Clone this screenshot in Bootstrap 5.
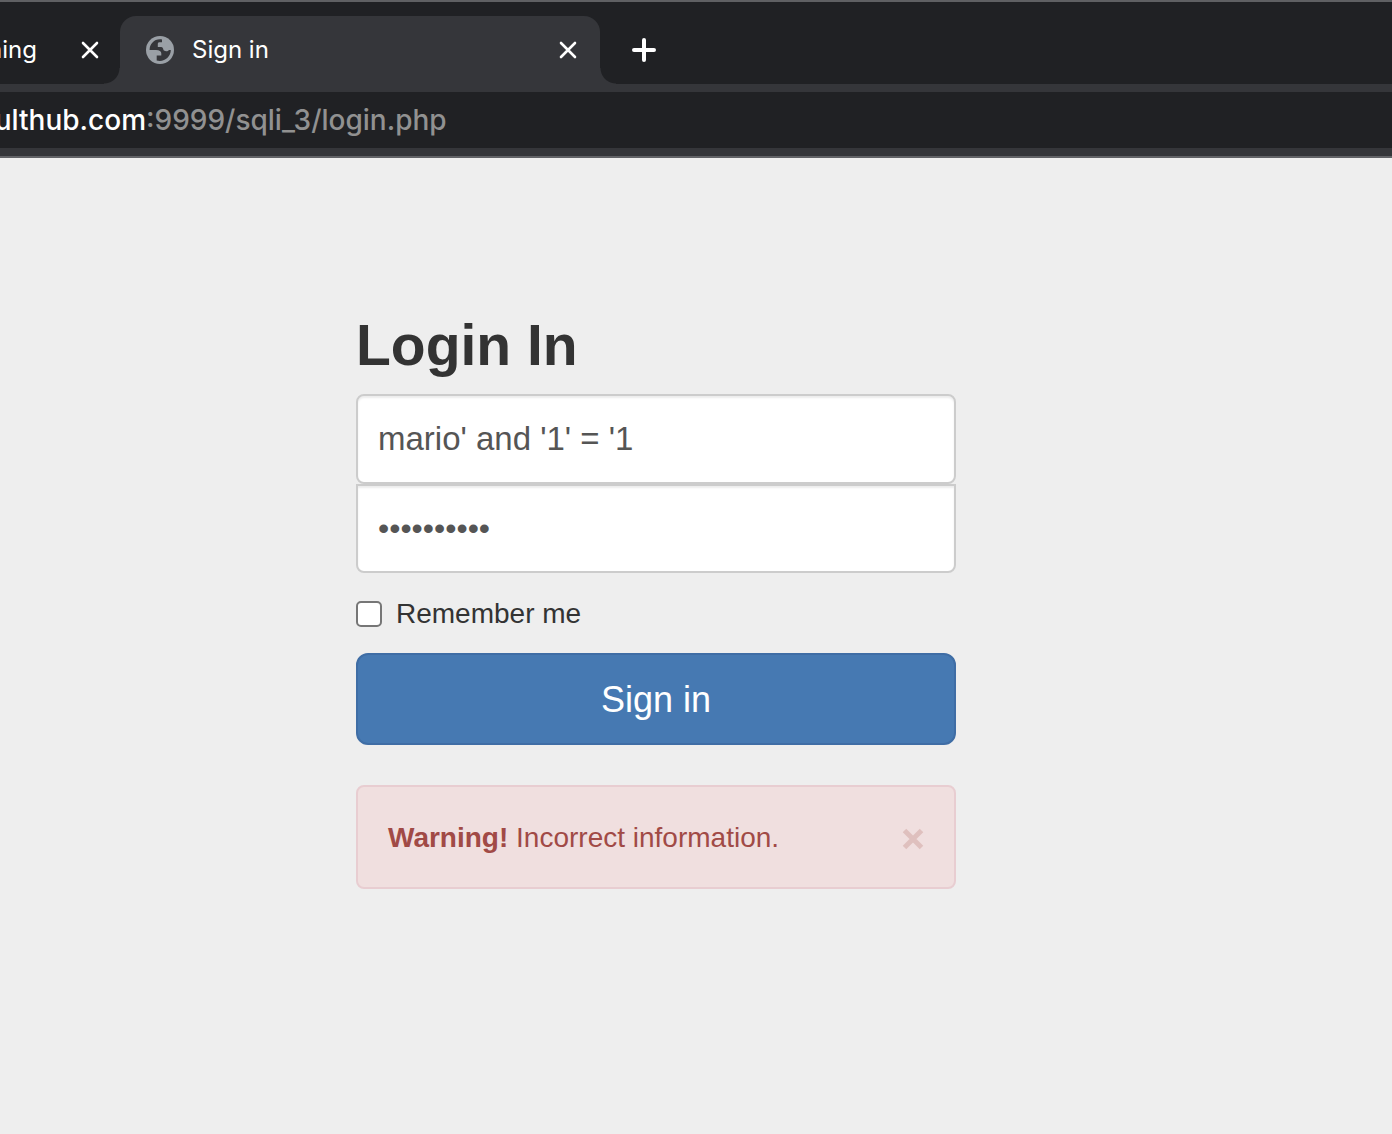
<!DOCTYPE html>
<html lang="en">
<head>
<meta charset="utf-8">
<meta name="viewport" content="width=device-width, initial-scale=1">
<title>Sign in</title>
<link href="https://cdn.jsdelivr.net/npm/bootstrap@5.3.0/dist/css/bootstrap.min.css" rel="stylesheet">
<style>
  body { background: #eee; color: #333; font-family: "Liberation Sans", Arial, sans-serif; font-size: 28px; line-height: 40px; }
  .browser { background: #35363a; font-family: Inter, "Noto Sans", sans-serif; border-top: 2px solid #5f6063; border-bottom: 2px solid #626367; }
  .tab-strip { background: #202124; height: 82px; padding-top: 14px; }
  .tab-strip button { background: none; border: 0; padding: 0; line-height: 0; color: #fff; }
  .tab-item { font-size: 24px; line-height: 68px; color: #fff; text-decoration: none; }
  .tab-prev { width: 120px; padding-right: 20px; }
  .tab-prev .tab-item { width: 37px; }
  .tab-current { width: 480px; padding: 0 22px 0 26px; background: #35363a; border-radius: 16px 16px 0 0; }
  .tab-current::before, .tab-current::after { content: ""; position: absolute; bottom: 0; width: 16px; height: 16px; }
  .tab-current::before { right: 100%; background: radial-gradient(circle at 0 0, #202124 15px, #35363a 16px); }
  .tab-current::after { left: 100%; background: radial-gradient(circle at 100% 0, #202124 15px, #35363a 16px); }
  .tab-current .tab-item { padding-left: 18px; }
  .tab-strip .new-tab { margin-left: 30px; height: 68px; }
  .address { background: #202124; margin: 8px 0; height: 56px; font-size: 28px; font-weight: 500; line-height: 56px; color: #919191; }
  .host { width: 146px; color: #fff; }
  .page-area { padding: 154px 80px 40px 0; }
  .signin { width: 100%; max-width: 600px; }
  .signin h1 { font-size: 57px; font-weight: 700; line-height: 66px; margin-bottom: 16px; }
  .signin .form-control { height: 90px; padding: 20px; font-size: 33px; line-height: 46px; color: #555; background: #fff; border: 2px solid #ccc; border-radius: 8px; box-shadow: inset 0 2px 2px rgba(0,0,0,.075); }
  .signin .form-control[type=password] { height: 89px; font-size: 32px; border-radius: 0 0 8px 8px; }
  .signin .form-check { min-height: 40px; margin: 21px 0 19px; padding: 0; gap: 14px; }
  .signin .form-check-input { float: none; width: 26px; height: 26px; margin: 0; border: 2px solid #767676; border-radius: 5px; background-color: #fff; }
  .signin .form-check-input:checked { background-color: #0d6efd; }
  .signin .btn-signin { height: 92px; padding: 8px 12px 6px; font-size: 36px; line-height: 48px; color: #fff; background: #4679b2; border: 2px solid #3f6da5; border-radius: 12px; }
  .signin .alert { margin: 40px 0 0; padding: 31px 30px 29px; color: #a14a46; background: #f0dfdf; border: 2px solid #e8cdd1; border-radius: 8px; }
  .signin .alert button { background: none; border: 0; padding: 2px 0 0; line-height: 0; color: #dfc0be; }
</style>
<script src="https://cdn.jsdelivr.net/npm/bootstrap@5.3.0/dist/js/bootstrap.bundle.min.js"></script>
</head>
<body>
<header class="browser">
  <nav class="tab-strip d-flex" aria-label="Tabs">
    <div class="tab-prev d-flex align-items-center justify-content-between">
      <a class="tab-item d-flex justify-content-end overflow-hidden" href="#">ning</a>
      <button type="button" aria-label="Close tab"><svg width="20" height="20" viewBox="0 0 20 20" fill="none" stroke="currentColor" stroke-width="2.6" stroke-linecap="round"><path d="M3 3l14 14M17 3L3 17"/></svg></button>
    </div>
    <div class="tab-current position-relative d-flex align-items-center">
      <svg width="28" height="28" viewBox="0 0 28 28"><circle cx="14" cy="14" r="14" fill="#9aa0a6"/><path fill="#35363a" d="M16 3.4C9 2.200 3.600 7.500 3.600 14H10C13.500 14 15.300 15.300 15.300 17.500V19.500H10.700V24.500C18 26.500 24.800 21 24.800 14H23C22 15.500 19.500 15.800 18 14.500C17 13.500 17.300 11 15.300 10.900H11.800V8C11.800 6.800 12.500 6.300 13.500 6.300H16Z"/></svg>
      <a class="tab-item flex-grow-1" href="#" aria-current="page">Sign in</a>
      <button type="button" aria-label="Close tab"><svg width="20" height="20" viewBox="0 0 20 20" fill="none" stroke="currentColor" stroke-width="2.6" stroke-linecap="round"><path d="M3 3l14 14M17 3L3 17"/></svg></button>
    </div>
    <button class="new-tab" type="button" aria-label="New tab"><svg width="28" height="28" viewBox="0 0 28 28" fill="none" stroke="currentColor" stroke-width="4" stroke-linecap="round"><path d="M14 4v20M4 14h20"/></svg></button>
  </nav>
  <div class="address d-flex overflow-hidden">
    <span class="host d-flex justify-content-end overflow-hidden">ulthub.com</span><span>:9999/sqli_3/login.php</span>
  </div>
</header>
<main class="page-area">
  <form class="signin mx-auto" onsubmit="return false">
    <h1>Login In</h1>
    <input class="form-control" type="text" value="mario' and '1' = '1" aria-label="Username" autocomplete="off" spellcheck="false">
    <input class="form-control" type="password" value="password12" aria-label="Password" autocomplete="off">
    <div class="form-check d-flex align-items-center">
      <input class="form-check-input" type="checkbox" id="remember">
      <label class="form-check-label" for="remember">Remember me</label>
    </div>
    <button class="btn btn-signin w-100" type="submit">Sign in</button>
    <div class="alert d-flex align-items-center justify-content-between" role="alert">
      <span><strong>Warning!</strong> Incorrect information.</span>
      <button type="button" data-bs-dismiss="alert" aria-label="Close"><svg width="22" height="22" viewBox="0 0 22 22" fill="none" stroke="currentColor" stroke-width="5"><path d="M2.500 2.500l17 17M19.500 2.500l-17 17"/></svg></button>
    </div>
  </form>
</main>
</body>
</html>
